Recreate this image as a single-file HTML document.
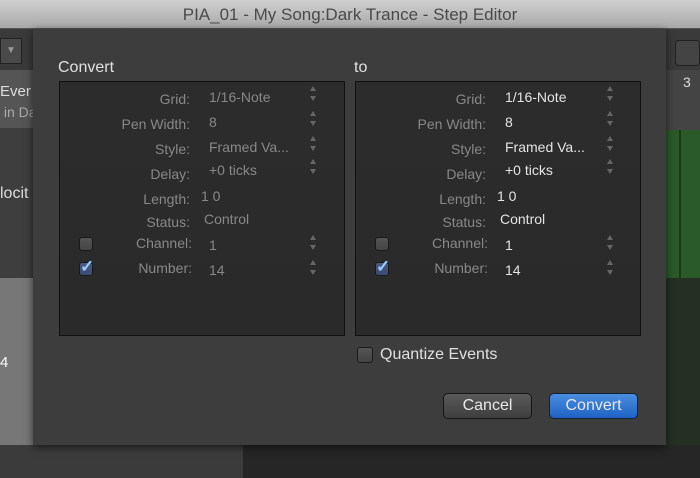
<!DOCTYPE html>
<html><head><style>
*{margin:0;padding:0;box-sizing:border-box}
body{width:700px;height:478px;overflow:hidden;position:relative;background:#3b3b3b;font-family:"Liberation Sans",sans-serif}
.a{position:absolute}
.title{left:0;top:0;width:700px;height:29px;background:linear-gradient(#d0d0d0,#a9a9a9);border-bottom:1px solid #555;text-align:center;font-size:17px;line-height:30px;color:#4a4a4a}
.dlg{left:33px;top:29px;width:633px;height:416px;background:#3d3d3d;box-shadow:0 2px 8px rgba(0,0,0,.6)}
.box{position:absolute;top:52px;width:286px;height:255px;background:linear-gradient(#2c2c2c,#2a2a2a);border:1px solid #111}
.lb{position:absolute;font-size:14px;color:#888;text-align:right;width:130px}
.v{position:absolute;font-size:14px;color:#888}
.w .v{color:#e4e4e4}
.cb{position:absolute;width:14px;height:14px;border:1px solid #1a1a1a;border-radius:3px;background:linear-gradient(#555,#444)}
.btn{position:absolute;top:364px;width:89px;height:26px;border-radius:5px;font-size:16px;text-align:center;line-height:24px;color:#e8e8e8;border:1px solid #151515}
</style></head><body>
<div class="a title">PIA_01 - My Song:Dark Trance - Step Editor</div>
<div class="a" style="left:0;top:30px;width:33px;height:40px;background:#3a3a3a"></div>
<div class="a" style="left:0;top:38px;width:22px;height:26px;background:#4a4a4a;border:1px solid #222;color:#999;font-size:10px;text-align:center;line-height:24px">▼</div>
<div class="a" style="left:0;top:70px;width:33px;height:58px;background:#555;color:#ddd;font-size:15px;line-height:20px;padding-top:12px">Ever<br><span style="color:#aaa;font-size:14px;white-space:nowrap">&nbsp;in Da</span></div>
<div class="a" style="left:0;top:128px;width:33px;height:150px;background:#3e3e3e;color:#ddd;font-size:16px;padding-top:57px;overflow:hidden;white-space:nowrap">locit</div>
<div class="a" style="left:0;top:278px;width:33px;height:167px;background:#777;color:#fff;font-size:15px;padding-top:76px">4</div>
<div class="a" style="left:243px;top:445px;width:457px;height:33px;background:#262626"></div>
<div class="a" style="left:666px;top:30px;width:34px;height:40px;background:#3a3a3a"></div>
<div class="a" style="left:675px;top:40px;width:25px;height:26px;background:#444;border:1px solid #222;border-radius:4px"></div>
<div class="a" style="left:666px;top:70px;width:34px;height:60px;background:#444;color:#ddd;font-size:14px;padding:4px 0 0 17px">3</div>
<div class="a" style="left:666px;top:130px;width:34px;height:148px;background:#2a5a2a"></div>
<div class="a" style="left:679px;top:130px;width:2px;height:148px;background:#1a3a1a"></div>
<div class="a" style="left:666px;top:278px;width:34px;height:167px;background:#243024"></div>
<div class="a dlg">
 <div class="a" style="left:25px;top:30px;font-size:16px;color:#e0e0e0">Convert</div>
 <div class="a" style="left:321px;top:30px;font-size:16px;color:#e0e0e0">to</div>
 <div class="box" style="left:26px">
  <div class="lb" style="left:0;top:9px">Grid:</div><div class="v" style="left:149px;top:7px">1/16-Note</div>
  <div class="lb" style="left:0;top:34px">Pen Width:</div><div class="v" style="left:149px;top:32px">8</div>
  <div class="lb" style="left:0;top:59px">Style:</div><div class="v" style="left:149px;top:57px">Framed Va...</div>
  <div class="lb" style="left:0;top:84px">Delay:</div><div class="v" style="left:149px;top:80px">+0 ticks</div>
  <div class="lb" style="left:0;top:109px">Length:</div><div class="v" style="left:141px;top:106px">1 0</div>
  <div class="lb" style="left:0;top:132px">Status:</div><div class="v" style="left:144px;top:129px">Control</div>
  <div class="lb" style="left:2px;top:153px">Channel:</div><div class="v" style="left:149px;top:155px">1</div>
  <div class="lb" style="left:2px;top:178px">Number:</div><div class="v" style="left:149px;top:180px">14</div>
  <div class="cb" style="left:19px;top:155px"></div>
  <div class="cb" style="left:19px;top:180px;background:linear-gradient(#4a5a80,#3a4a70)"><span style="position:absolute;left:0;top:-6px;color:#9cf;font-size:17px;font-weight:bold">✓</span></div>
 </div>
 <div class="box w" style="left:322px">
  <div class="lb" style="left:0;top:9px">Grid:</div><div class="v" style="left:149px;top:7px">1/16-Note</div>
  <div class="lb" style="left:0;top:34px">Pen Width:</div><div class="v" style="left:149px;top:32px">8</div>
  <div class="lb" style="left:0;top:59px">Style:</div><div class="v" style="left:149px;top:57px">Framed Va...</div>
  <div class="lb" style="left:0;top:84px">Delay:</div><div class="v" style="left:149px;top:80px">+0 ticks</div>
  <div class="lb" style="left:0;top:109px">Length:</div><div class="v" style="left:141px;top:106px">1 0</div>
  <div class="lb" style="left:0;top:132px">Status:</div><div class="v" style="left:144px;top:129px">Control</div>
  <div class="lb" style="left:2px;top:153px">Channel:</div><div class="v" style="left:149px;top:155px">1</div>
  <div class="lb" style="left:2px;top:178px">Number:</div><div class="v" style="left:149px;top:180px">14</div>
  <div class="cb" style="left:19px;top:155px"></div>
  <div class="cb" style="left:19px;top:180px;background:linear-gradient(#4a5a80,#3a4a70)"><span style="position:absolute;left:0;top:-6px;color:#9cf;font-size:17px;font-weight:bold">✓</span></div>
 </div>
 <div class="cb" style="left:324px;top:318px;width:16px;height:16px"></div>
 <div class="a" style="left:347px;top:317px;font-size:16px;color:#e0e0e0">Quantize Events</div>
 <div class="btn" style="left:410px;background:linear-gradient(#5a5a5a,#3e3e3e)">Cancel</div>
 <div class="btn" style="left:516px;background:linear-gradient(#4a8ee0,#1f62c4);border-color:#123">Convert</div>
</div>
<svg class="a" style="left:0;top:0" width="700" height="478">
 <g fill="#666">
  <path d="M310 91l3-5 3 5z M310 96l3 5 3-5z"/><path d="M310 116l3-5 3 5z M310 121l3 5 3-5z"/>
  <path d="M310 141l3-5 3 5z M310 146l3 5 3-5z"/><path d="M310 164l3-5 3 5z M310 169l3 5 3-5z"/>
  <path d="M310 240l3-5 3 5z M310 245l3 5 3-5z"/><path d="M310 265l3-5 3 5z M310 270l3 5 3-5z"/>
  <path d="M607 91l3-5 3 5z M607 96l3 5 3-5z"/><path d="M607 116l3-5 3 5z M607 121l3 5 3-5z"/>
  <path d="M607 141l3-5 3 5z M607 146l3 5 3-5z"/><path d="M607 164l3-5 3 5z M607 169l3 5 3-5z"/>
  <path d="M607 240l3-5 3 5z M607 245l3 5 3-5z"/><path d="M607 265l3-5 3 5z M607 270l3 5 3-5z"/>
 </g>
</svg>
</body></html>
